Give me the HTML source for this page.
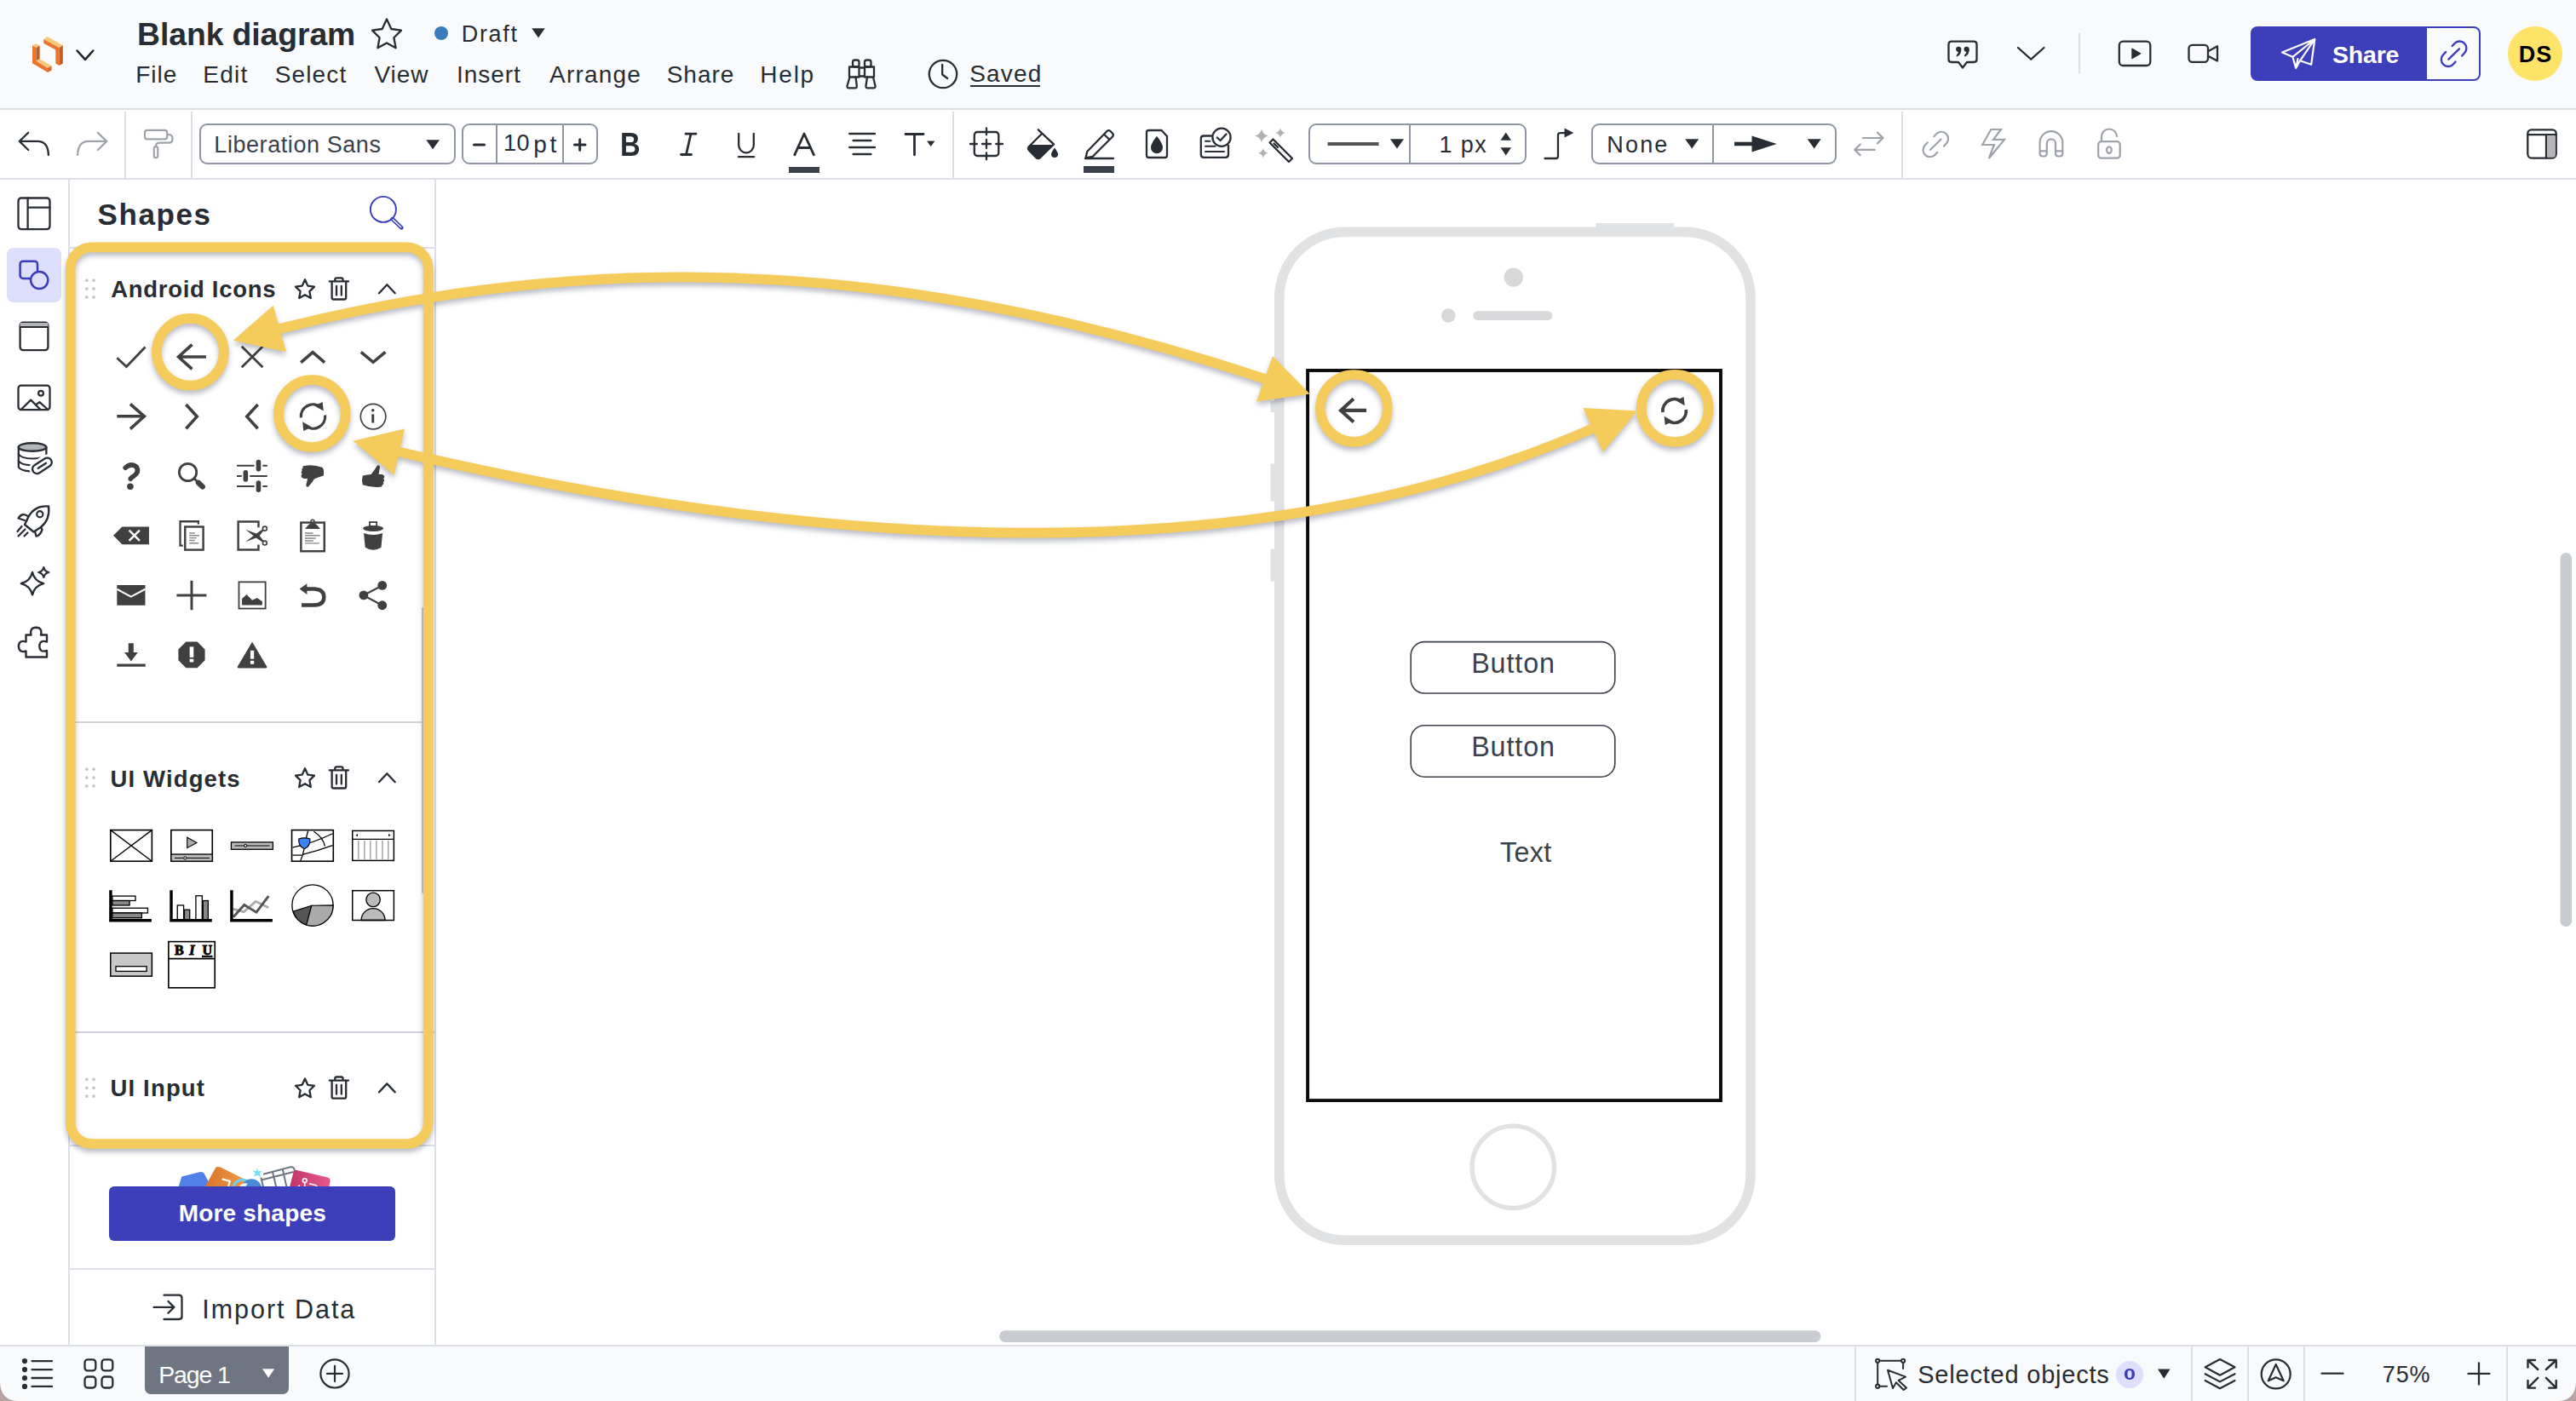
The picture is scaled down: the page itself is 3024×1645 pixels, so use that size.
<!DOCTYPE html>
<html lang="en">
<head>
<meta charset="utf-8">
<title>Blank diagram</title>
<style>
*{box-sizing:border-box;margin:0;padding:0}
html,body{width:3024px;height:1645px;overflow:hidden;background:#fff}
body{font-family:"Liberation Sans",sans-serif;color:#282c33;position:relative;font-kerning:normal}
@media (max-width:2000px){html{width:1512px;height:823px}body{zoom:.5}}
.abs{position:absolute}
.t{position:absolute;white-space:pre;line-height:1;font-kerning:normal}
svg{position:absolute;overflow:visible}
#header{position:absolute;left:0;top:0;width:3024px;height:129px;background:#f9fafc;border-bottom:2px solid #dcdfe6}
#toolbar{position:absolute;left:0;top:129px;width:3024px;height:82px;background:#fff;border-bottom:2px solid #dcdfe6}
#rail{position:absolute;left:0;top:211px;width:82px;height:1368px;background:#fff;border-right:2px solid #dcdfe6}
#panel{position:absolute;left:82px;top:211px;width:430px;height:1368px;background:#fff;border-right:2px solid #dcdfe6}
#canvas{position:absolute;left:512px;top:211px;width:2512px;height:1368px;background:#fff}
#bottom{position:absolute;left:0;top:1579px;width:3024px;height:66px;background:#f9fafc;border-top:2px solid #dcdfe6}
.vsep{position:absolute;width:2px;background:#dcdfe6}
.hsep{position:absolute;height:2px;background:#dcdfe6}
.box{position:absolute;border:2px solid #8f96a3;border-radius:9px;background:#fff}
.ic{fill:none;stroke:#282c33;stroke-width:2.3;stroke-linecap:round;stroke-linejoin:round}
.icg{fill:none;stroke:#9ea3ab;stroke-width:2.2;stroke-linecap:round;stroke-linejoin:round}
</style>
</head>
<body>
<div id="header"></div>
<div id="toolbar"></div>
<div id="rail"></div>
<div id="panel"></div>
<div id="canvas"></div>
<div id="bottom"></div>

<!-- ================= HEADER ================= -->
<!--HEADER-START-->
<svg class="abs" style="left:20px;top:20px" width="120" height="90" viewBox="0 0 1868 1401">
 <polygon points="280,520 345,483 415,522 350,560" fill="#f9c877"/>
 <polygon points="280,520 350,560 350,800 560,930 560,1012 280,845" fill="#e8762f"/>
 <polygon points="350,560 415,522 415,765 350,800" fill="#c45d25"/>
 <polygon points="350,800 415,765 632,893 560,930" fill="#f9c877"/>
 <polygon points="560,930 632,893 632,972 560,1012" fill="#dc6c2c"/>
 <polygon points="485,405 555,358 838,518 770,560" fill="#f9c877"/>
 <polygon points="485,405 770,560 770,888 705,850 705,600 485,478" fill="#e8762f"/>
 <polygon points="770,560 838,518 838,850 770,888" fill="#c45d25"/>
 <polyline points="1098,615 1245,778 1390,615" fill="none" stroke="#1e2430" stroke-width="40" stroke-linecap="round" stroke-linejoin="round"/>
</svg>
<span class="t" style="left:161.1px;top:22.0px;font-size:37.3px;font-weight:700;color:#282c33;letter-spacing:-0.07px;">Blank diagram</span>
<span class="t" style="left:541.8px;top:26.7px;font-size:27px;font-weight:400;color:#282c33;letter-spacing:1.66px;">Draft</span>
<span class="t" style="left:159.3px;top:73.8px;font-size:28px;font-weight:400;color:#282c33;letter-spacing:0.97px;">File</span>
<span class="t" style="left:238.3px;top:73.8px;font-size:28px;font-weight:400;color:#282c33;letter-spacing:1.24px;">Edit</span>
<span class="t" style="left:322.7px;top:73.8px;font-size:28px;font-weight:400;color:#282c33;letter-spacing:1.14px;">Select</span>
<span class="t" style="left:439.5px;top:73.8px;font-size:28px;font-weight:400;color:#282c33;letter-spacing:0.95px;">View</span>
<span class="t" style="left:536.0px;top:73.8px;font-size:28px;font-weight:400;color:#282c33;letter-spacing:0.93px;">Insert</span>
<span class="t" style="left:645.0px;top:73.8px;font-size:28px;font-weight:400;color:#282c33;letter-spacing:1.20px;">Arrange</span>
<span class="t" style="left:782.7px;top:73.8px;font-size:28px;font-weight:400;color:#282c33;letter-spacing:0.98px;">Share</span>
<span class="t" style="left:892.3px;top:73.8px;font-size:28px;font-weight:400;color:#282c33;letter-spacing:1.77px;">Help</span>
<span class="t" style="left:1138.2px;top:73.3px;font-size:28px;font-weight:400;color:#282c33;letter-spacing:1.18px;">Saved</span>
<div class="abs" style="left:1139px;top:100px;width:82px;height:2px;background:#282c33"></div>
<div class="abs" style="left:510px;top:31px;width:16px;height:16px;border-radius:50%;background:#3a7cbb"></div>
<svg class="abs" style="left:0;top:0" width="3024" height="129" viewBox="0 0 3024 129">
 <g class="ic">
  <!-- star -->
  <path d="M454 23.5 L459.3 35 L471 36.6 L462.4 45.2 L464.6 57.3 L454 51.4 L443.4 57.3 L445.6 45.2 L437 36.6 L448.7 35 Z" transform="translate(0,-1)"/>
  <!-- binoculars -->
  <rect x="1001" y="70.5" width="7.5" height="8" rx="2.5"/>
  <rect x="1015" y="70.5" width="7.5" height="8" rx="2.5"/>
  <path d="M997 78.5 H1008.5 V90.5 H997 Z M1015 78.5 H1026 V90.5 H1015 Z M1008.5 79.5 H1015 M1008.5 89.5 H1015"/>
  <path d="M997.5 90.5 L994.5 101 Q994.3 103.3 996.5 103.3 H1004 Q1006 103.3 1005.8 101 L1004.5 90.5"/>
  <path d="M1018 90.5 L1016.5 101 Q1016.3 103.3 1018.5 103.3 H1025.5 Q1027.8 103.3 1027.5 101 L1025 90.5"/>
  <!-- clock -->
  <circle cx="1107" cy="87" r="16.2"/>
  <path d="M1106.2 76 V87.5 L1112.2 92"/>
  <!-- comment -->
  <path d="M2291 48.7 H2317 Q2320.5 48.7 2320.5 52.2 V69.5 Q2320.5 73 2317 73 H2309 L2304 79.5 L2299 73 H2291 Q2287.5 73 2287.5 69.5 V52.2 Q2287.5 48.7 2291 48.7 Z"/>
  <!-- chevron -->
  <path d="M2369 56 L2384.2 69.7 L2399.5 56"/>
  <!-- present -->
  <rect x="2487.8" y="48.7" width="36.5" height="28.3" rx="4.5"/>
  <!-- video -->
  <rect x="2569.5" y="52.8" width="22.5" height="20" rx="4"/>
  <path d="M2593.5 59.5 L2603 54.3 V71.5 L2593.5 66.5"/>
 </g>
 <path d="M2503 57.3 V68.4 L2512.5 62.8 Z" fill="#282c33" stroke="#282c33" stroke-width="1.5" stroke-linejoin="round"/>
 <!-- quotes -->
 <g fill="#282c33"><circle cx="2299.2" cy="57.8" r="3.1"/><path d="M2302.3 57.4 Q2302.8 63.500 2297.500 66.500 L2296.400 65.200 Q2299.400 62.600 2299.300 59.500 Z"/>
 <circle cx="2308.6" cy="57.8" r="3.1"/><path d="M2311.700 57.400 Q2312.200 63.500 2306.900 66.500 L2305.800 65.200 Q2308.800 62.600 2308.700 59.500 Z"/></g>
 <!-- caret draft -->
 <path d="M624.3 33.2 H639.7 L632 44.6 Z" fill="#282c33"/>
 <rect x="2440" y="39" width="2" height="47.5" fill="#dcdfe6"/>
</svg>
<div class="abs" style="left:2642px;top:31px;width:270px;height:64px;border-radius:8px;background:#3d3fba"></div>
<div class="abs" style="left:2849px;top:33px;width:61px;height:60px;border-radius:0 6px 6px 0;background:#fafbfd"></div>
<span class="t" style="left:2738.1px;top:50.2px;font-size:28.5px;font-weight:700;color:#ffffff;letter-spacing:-0.24px;">Share</span>
<div class="abs" style="left:2944px;top:31px;width:64px;height:64px;border-radius:50%;background:#fde368"></div>
<span class="t" style="left:2956.7px;top:51.3px;font-size:27px;font-weight:700;color:#000000;letter-spacing:1.11px;">DS</span>
<svg class="abs" style="left:0;top:0" width="3024" height="129" viewBox="0 0 3024 129">
 <g fill="none" stroke="#fff" stroke-width="2.2" stroke-linejoin="round" stroke-linecap="round">
  <path d="M2717.3 46 L2679 61.6 L2691.4 66.8 L2695.2 80 L2700 71.3 L2713.2 75.8 Z M2691.4 66.8 L2717.3 46 L2700 71.3 M2695.2 80 L2697.5 69"/>
 </g>
 <g fill="none" stroke="#3d3fba" stroke-width="2.4" stroke-linecap="round" transform="translate(2880.6,63.3)"><path d="M-1.9 -9.3 L1.5 -12.9 A8.1 8.1 0 0 1 12.9 -1.500 L9.500 2.200 M1.900 9.300 L-1.500 12.900 A8.100 8.100 0 0 1 -12.900 1.500 L-9.500 -2.200 M-6.200 6.300 L6.300 -6"/></g>
</svg>
<!--HEADER-END-->

<!-- ================= TOOLBAR ================= -->
<!--TOOLBAR-START-->
<div class="vsep" style="left:146px;top:131px;height:78px"></div>
<div class="vsep" style="left:224px;top:131px;height:78px"></div>
<div class="vsep" style="left:1118px;top:131px;height:78px"></div>
<div class="vsep" style="left:2232px;top:131px;height:78px"></div>
<div class="box" style="left:234px;top:145px;width:300.5px;height:48px"></div>
<span class="t" style="left:251.3px;top:157.1px;font-size:27px;font-weight:400;color:#3a414a;letter-spacing:0.57px;">Liberation Sans</span>
<div class="box" style="left:542px;top:145px;width:160px;height:48px"></div>
<div class="abs" style="left:582px;top:147px;width:2px;height:44px;background:#8f96a3"></div>
<div class="abs" style="left:660px;top:147px;width:2px;height:44px;background:#8f96a3"></div>
<span class="t" style="left:591.0px;top:155.4px;font-size:27px;font-weight:400;color:#282c33;letter-spacing:0.40px;">10</span>
<span class="t" style="left:626.2px;top:155.5px;font-size:28px;font-weight:400;color:#282c33;letter-spacing:3.72px;">pt</span>
<span class="t" style="left:727.9px;top:150.5px;font-size:38px;font-weight:700;color:#282c33;letter-spacing:0.00px;transform:scaleX(0.863);transform-origin:0 0;">B</span>
<div class="box" style="left:1536px;top:145px;width:256px;height:48px"></div>
<div class="abs" style="left:1654px;top:147px;width:2px;height:44px;background:#8f96a3"></div>
<div class="box" style="left:1867.5px;top:145px;width:288.5px;height:48px;background:none"></div>
<div class="abs" style="left:2010px;top:147px;width:2px;height:44px;background:#8f96a3"></div>
<span class="t" style="left:1689.5px;top:156.9px;font-size:27px;font-weight:400;color:#282c33;letter-spacing:1.39px;">1 px</span>
<span class="t" style="left:1886.3px;top:156.9px;font-size:27px;font-weight:400;color:#282c33;letter-spacing:2.18px;">None</span>
<div class="abs" style="left:926px;top:195.5px;width:36px;height:7px;background:#3a414a"></div>
<div class="abs" style="left:1272px;top:195px;width:36px;height:7.5px;background:#3a414a"></div>
<svg class="abs" style="left:0;top:129px" width="3024" height="82" viewBox="0 129 3024 82">
 <g class="ic" stroke="#1e2430" stroke-width="2.15">
  <!-- undo -->
  <path d="M33.2 155.8 L22.8 165.9 L33.2 176 M22.8 165.9 H44 Q56.5 165.9 56.9 182"/>
  <!-- minus plus in size box -->
  <path d="M556.5 170 H568.5 M674.5 170 H687 M680.7 163.8 V176.2" stroke-width="3"/>
  <!-- I -->
  <path d="M805 157.2 H817 M799.5 181.5 H811.5 M811 157.2 L805.5 181.5" stroke-width="2.8"/>
  <!-- U -->
  <path d="M867.2 157 V170.5 A8.8 8.8 0 0 0 884.8 170.5 V157 M867 184.2 H885.2"/>
  <!-- A -->
  <path d="M932.8 181.8 L944 157 L955.4 181.8 M936.6 173.5 H951.6" stroke-width="2.8"/>
  <!-- align -->
  <path d="M997.2 157 H1027 M1001.5 165 H1022.5 M997.2 173 H1027 M1001.5 181 H1022.5"/>
  <!-- T -->
  <path d="M1063 157.5 H1084 M1073.5 157.5 V181.8" stroke-width="2.8"/>
  <!-- crosshair -->
  <rect x="1143.8" y="155" width="28.5" height="28" rx="3.5"/>
  <path d="M1158 150.5 V158.3 M1158 179.5 V187.3 M1139 169 H1146.8 M1169.3 169 H1177 M1153 169 H1163 M1158 164 V174"/>
  <!-- bucket -->
  <path d="M1218.8 152.3 L1237 169.4 L1220.8 185.3 Q1218.6 187 1216.5 185.3 L1208 176.5 Q1206 174 1208 172 L1222.5 157.5"/>
  <!-- pen -->
  <path d="M1274.5 185.5 L1276.2 178 L1299.5 154 Q1301.5 152.3 1303.5 154 L1306 156.5 Q1307.7 158.5 1306 160.5 L1282.5 184 Z M1296 157.7 L1302.5 164 M1274 186 H1307"/>
  <!-- page drop -->
  <path d="M1348.5 153 H1363.5 L1370 160 V182.5 Q1370 185 1367.5 185 H1348.5 Q1346 185 1346 182.5 V155.5 Q1346 153 1348.5 153 Z"/>
  <!-- card -->
  <path d="M1423 159.5 H1413 Q1409.8 159.5 1409.8 162.7 V181.5 Q1409.8 184.8 1413 184.8 H1438.7 Q1442 184.8 1442 181.5 V171"/>
  <path d="M1415 165.7 H1420.5 M1415 171.8 H1426.5 M1415 177.9 H1437" stroke-width="2"/>
  <circle cx="1434" cy="161.2" r="10.6" fill="#fff"/>
  <path d="M1428.8 161.5 L1432.6 165 L1439.5 157.5"/>
  <!-- wand -->
  <path d="M1494.5 163.5 L1517 186 L1513 190 L1490.5 167.5 Z M1495.5 168.5 L1500 173"/>
  <!-- connector -->
  <path d="M1813.5 186 H1826.5 Q1829 186 1829 183.5 V158.7 Q1829 156.2 1831.5 156.2 H1837" stroke-width="2.3"/>
  <!-- panel right -->
  <rect x="2967.3" y="152.3" width="33.4" height="33.3" rx="4.5"/>
  <path d="M2967.3 158.2 H3000.7 M2989 158.2 V185.6"/>
 </g>
 <g fill="#282c33">
  <path d="M500.3 164.2 H516 L508.1 175.2 Z"/>
  <path d="M1088 165.5 H1097.5 L1092.7 172 Z"/>
  <path d="M1208.5 170 H1236 L1220.8 185 Q1218.6 187 1216.5 185 L1208 176.5 Q1206 174 1208 172 Z"/>
  <path d="M1238 173.5 Q1242 179 1242 181 A4 4 0 0 1 1234 181 Q1234 179 1238 173.5 Z"/>
  <path d="M1358 159.8 Q1365 168.5 1365 173.3 A7 7 0 0 1 1351 173.3 Q1351 168.5 1358 159.8 Z"/>
  <path d="M1632 163.2 H1648 L1640 174.6 Z"/>
  <path d="M1761.5 164.8 H1774 L1767.8 155.4 Z"/>
  <path d="M1761.5 173.3 H1774 L1767.8 182.6 Z"/>
  <path d="M1836.5 150.4 V161.6 L1847.3 156 Z"/>
  <path d="M1978.2 163.2 H1994.2 L1986.2 174.6 Z"/>
  <path d="M2121.7 163.2 H2137.7 L2129.7 174.6 Z"/>
  <path d="M2036 166.7 H2058 V171.2 H2036 Z"/>
  <path d="M2056.5 159.5 L2085.8 169 L2056.5 178.6 Z"/>
 </g>
 <rect x="2990.2" y="159.4" width="9.3" height="25" fill="#b4b5b7"/>
 <path d="M1558.5 169 H1618.5" stroke="#555" stroke-width="4.2" fill="none"/>
 <!-- sparkles -->
 <g fill="#b1b1b1">
  <path d="M1481 151.5 Q1482.5 158 1489 159.5 Q1482.5 161 1481 167.5 Q1479.5 161 1473 159.5 Q1479.5 158 1481 151.5 Z"/>
  <path d="M1503 150.3 Q1504 155 1508.8 156 Q1504 157 1503 161.7 Q1502 157 1497.2 156 Q1502 155 1503 150.3 Z"/>
  <path d="M1482.8 174 Q1483.8 178.8 1488.6 179.8 Q1483.8 180.8 1482.8 185.6 Q1481.8 180.8 1477 179.8 Q1481.8 178.8 1482.8 174 Z"/>
 </g>
 <g class="icg" stroke="#8e9299">
  <!-- redo -->
  <path d="M114.8 155.8 L125.2 165.9 L114.8 176 M125.2 165.9 H104 Q91.5 165.9 91.1 182"/>
  <!-- roller -->
  <rect x="170" y="152.8" width="26.2" height="10.6" rx="3"/>
  <path d="M196.5 158 H198 Q202.5 158 202.5 162.5 V163 Q202.5 167.7 198 167.7 H187.5 Q183 167.7 183 172"/>
  <rect x="180.8" y="172.2" width="4.5" height="13" rx="2.2"/>
  <!-- swap -->
  <path d="M2187 162 H2210.3 M2204 155.6 L2210.5 162 L2204 168.4 M2200.8 175.9 H2177.5 M2183.8 169.5 L2177.3 175.9 L2183.8 182.3" stroke-width="2.2"/>
  <!-- link -->
  <g transform="translate(2272.3,169.5)"><path d="M-1.9 -9.3 L1.5 -12.9 A8.1 8.1 0 0 1 12.9 -1.5 L9.5 2.2 M1.9 9.3 L-1.5 12.9 A8.1 8.1 0 0 1 -12.9 1.5 L-9.5 -2.2 M-6.2 6.3 L6.3 -6"/></g>
  <!-- bolt -->
  <path d="M2337.3 152 H2349 L2340 163.9 H2353 L2334.8 186 L2340.9 170 H2327.2 Z" stroke-linejoin="miter"/>
  <!-- magnet -->
  <path d="M2394.6 167.5 A13.35 13.35 0 0 1 2421.3 167.5 V180 Q2421.3 183.5 2418 183.5 H2416.3 Q2413 183.5 2413 180 V168.5 A5.1 5.1 0 0 0 2402.8 168.5 V180 Q2402.8 183.5 2399.5 183.5 H2397.9 Q2394.6 183.5 2394.6 180 Z M2394.6 177.4 H2402.8 M2413 177.4 H2421.3"/>
  <!-- lock -->
  <rect x="2463.2" y="166.2" width="25.5" height="19.5" rx="3.5"/>
  <path d="M2467 166 V161 A9 9 0 0 1 2485 160"/>
  <ellipse cx="2475.9" cy="176.1" rx="2.9" ry="3.8"/>
 </g>
</svg>
<!--TOOLBAR-END-->

<!-- ================= RAIL ================= -->
<!--RAIL-START-->
<div class="abs" style="left:8px;top:291px;width:64px;height:64px;border-radius:8px;background:#dedffc"></div>
<svg class="abs" style="left:0;top:211px" width="82" height="600" viewBox="0 211 82 600">
 <g class="ic" stroke-width="2.15">
  <rect x="21.5" y="232.5" width="37" height="36.6" rx="3.5"/>
  <path d="M32.6 232.5 V269 M32.6 243.6 H58.5"/>
  <!-- window -->
  <rect x="23.6" y="378.6" width="32.8" height="32.6" rx="3.5"/>
  <!-- image -->
  <rect x="21.5" y="452.6" width="37" height="28.6" rx="3.5"/>
  <path d="M24.6 481 L36.2 469.6 L47.6 481 M42 475.5 L46.4 472.2 L56.4 481" stroke-width="2.3"/>
  <circle cx="48" cy="461.8" r="2.9" stroke-width="2.2"/>
  <!-- db -->
  <path d="M21.8 525 V548.500 Q24.500 553 36 553.300 M54.400 525 V533" />
  <path d="M21.800 533.200 Q25 538.300 38 538.500 Q44 538.400 47 537.500 M21.800 541 Q25 546 36.500 546.200" stroke-width="2.150"/>
  <!-- rocket -->
  <path d="M57 594.5 Q41 593 33.5 606.5 L29 616 L39.5 624.5 L48 619 Q59 610 57 594.5 Z" stroke-width="2.4"/>
  <circle cx="46.8" cy="603.8" r="3.6" stroke-width="2.2"/>
  <path d="M33.5 606.5 Q26 601 21.5 608.5 L29 611 M48 619 L49.5 622 Q47 629 42.5 629.5 L41 624" stroke-width="2.3"/>
  <path d="M20.5 624 L25.5 618 M21.5 629.5 L29.5 621.5 M28.5 629.5 L32.5 625.5" stroke-width="2.2"/>
  <!-- sparkle -->
  <path d="M38 672 Q40.5 682.5 51.2 685.2 Q40.5 688 38 698.4 Q35.500 688 24.8 685.2 Q35.5 682.500 38 672 Z" stroke-width="2.4"/>
  <path d="M51.300 666 Q52.400 671 57.300 672 Q52.400 673 51.300 678 Q50.200 673 45.300 672 Q50.200 671 51.300 666 Z" stroke-width="2.2"/>
  <!-- puzzle -->
  <path d="M30.500 745.500 H36.500 Q34.500 737 42.500 736.800 Q50 737 48 745.500 H55 V753.500 Q46.500 751 46.300 758.800 Q46.500 766.500 55 764 V771.500 H30.500 V764.500 Q22.500 767 21.800 758.800 Q22.500 751 30.500 753.500 Z" stroke-width="2.4"/>
 </g>
 <ellipse cx="38" cy="525" rx="16.300" ry="4.800" fill="#b4b5b7" stroke="#282c33" stroke-width="2.400"/>
 <path d="M23.600 379 H56.400 V384 H23.600 Z" fill="#b4b5b7"/>
 <path d="M23.600 384 H56.400" stroke="#282c33" stroke-width="2.200"/>
 <!-- db link -->
 <g transform="translate(49.4,546.8) rotate(-33)">
  <rect x="-13" y="-6.500" width="26" height="13" rx="6.500" fill="#fff" stroke="#fff" stroke-width="6"/>
  <rect x="-12.500" y="-5.300" width="25" height="10.600" rx="5.300" fill="none" stroke="#282c33" stroke-width="2.300"/>
  <path d="M-5.500 0 H5.500" stroke="#282c33" stroke-width="2.300" stroke-linecap="round"/>
 </g>
 <!-- shapes icon -->
 <rect x="23.600" y="306.700" width="20.400" height="20.200" rx="3.500" fill="none" stroke="#3b3db8" stroke-width="2.500"/>
 <circle cx="46.200" cy="329" r="10.100" fill="#dedffc" stroke="#3b3db8" stroke-width="2.500"/>
</svg>
<!--RAIL-END-->

<!-- ================= PANEL ================= -->
<!--PANEL-START-->
<span class="t" style="left:114.5px;top:234.4px;font-size:35px;font-weight:700;color:#282c33;letter-spacing:1.61px;">Shapes</span>
<div class="hsep" style="left:82px;top:289.5px;width:429px"></div>
<div class="hsep" style="left:88px;top:847px;width:409px;background:#cfd3da"></div>
<div class="hsep" style="left:88px;top:1211px;width:422px;background:#cfd3da"></div>
<div class="hsep" style="left:82px;top:1343.500px;width:429px"></div>
<div class="hsep" style="left:82px;top:1488.500px;width:429px"></div>
<div class="abs" style="left:494.500px;top:713px;width:3.500px;height:336px;background:#c3c6cb;border-radius:2px"></div>
<span class="t" style="left:130.3px;top:326.0px;font-size:27.5px;font-weight:700;color:#282c33;letter-spacing:0.69px;">Android Icons</span>
<span class="t" style="left:129.5px;top:900.6px;font-size:27.5px;font-weight:700;color:#282c33;letter-spacing:1.14px;">UI Widgets</span>
<span class="t" style="left:129.5px;top:1264.3px;font-size:27.5px;font-weight:700;color:#282c33;letter-spacing:1.16px;">UI Input</span>
<svg class="abs" style="left:82px;top:211px" width="430" height="1368" viewBox="82 211 430 1368">
 <defs>
  <g id="sechdr">
   <g fill="#c4c7cc"><circle cx="101.800" cy="329.200" r="1.900"/><circle cx="110" cy="329.200" r="1.900"/><circle cx="101.800" cy="339.100" r="1.900"/><circle cx="110" cy="339.100" r="1.900"/><circle cx="101.800" cy="348.900" r="1.900"/><circle cx="110" cy="348.900" r="1.900"/></g>
   <g class="ic" stroke-width="2">
    <path d="M358 328.300 L361.300 335.600 L369 336.600 L363.400 342.100 L364.800 350 L358 346.200 L351.200 350 L352.600 342.100 L347 336.600 L354.700 335.600 Z"/>
    <path d="M386.800 330.400 H409 M389.600 330.400 V349.500 Q389.600 351.500 391.600 351.500 H404.200 Q406.200 351.500 406.200 349.500 V330.400 M393.300 330.400 V328.300 Q393.300 326.300 395.300 326.300 H400.500 Q402.500 326.300 402.500 328.300 V330.400 M395 335.800 V346.500 M400.800 335.800 V346.500"/>
    <path d="M445 344.200 L454.300 334.200 L463.700 344.200"/>
   </g>
  </g>
 </defs>
 <use href="#sechdr"/>
 <use href="#sechdr" y="574"/>
 <use href="#sechdr" y="938.200"/>
 <!-- search -->
 <g fill="none" stroke="#3b3db8" stroke-width="1.900" stroke-linecap="round"><circle cx="449.900" cy="245.900" r="15"/><path d="M460.700 257.200 L471.300 267.300" stroke-width="4.600"/><path d="M461.200 257.700 L470.800 266.800" stroke="#fff" stroke-width="1.300"/></g>
 <!-- import -->
 <g class="ic" stroke-width="2.400"><path d="M192.500 1520.700 H210 Q213.500 1520.700 213.500 1524.200 V1545.500 Q213.500 1549 210 1549 H192.500 M180.500 1534.900 H203.500 M197.500 1528 L204.300 1534.900 L197.500 1541.800"/></g>
</svg>
<!-- more shapes deco -->
<svg class="abs" style="left:60px;top:1180px" width="470" height="230" viewBox="0 0 2576 1261">
 <defs><linearGradient id="gpk" x1="0" x2="1"><stop offset="0" stop-color="#c2356b"/><stop offset="1" stop-color="#e8588c"/></linearGradient>
 <linearGradient id="gor" x1="0" x2="1"><stop offset="0" stop-color="#d9762b"/><stop offset="1" stop-color="#f09a45"/></linearGradient></defs>
 <path d="M840 1105 L960 1075 Q975 1073 985 1085 L1030 1170 H820 Z" fill="#5180e8"/>
 <path d="M1060 1045 Q1075 1038 1090 1045 L1260 1130 L1240 1170 H990 Z" fill="url(#gor)"/>
 <path d="M1100 1120 L1150 1135 L1140 1170" fill="none" stroke="#fff" stroke-width="12"/>
 <circle cx="1230" cy="1185" r="60" fill="none" stroke="#6fd0f2" stroke-width="16"/>
 <circle cx="1290" cy="1185" r="65" fill="#4a8bd8"/>
 <path d="M1210 1170 Q1230 1140 1265 1150 L1250 1170 Z" fill="#eee"/>
 <path d="M1325 1050 L1333 1072 L1358 1068 L1340 1085 L1350 1108 L1328 1095 L1305 1105 L1313 1083 L1297 1066 L1320 1070 Z" fill="#6fe0f8"/>
 <g fill="none" stroke="#6e7682" stroke-width="11"><path d="M1365 1090 L1540 1043 Q1560 1040 1565 1058 L1580 1170 M1350 1110 L1365 1170 M1358 1125 L1560 1075 M1425 1075 L1448 1170 M1490 1058 L1515 1170"/></g>
 <path d="M1575 1062 L1780 1110 Q1800 1118 1795 1138 L1788 1170 H1535 L1560 1075 Q1565 1060 1575 1062 Z" fill="url(#gpk)"/>
 <g fill="none" stroke="#fff" stroke-width="9"><circle cx="1632" cy="1130" r="13"/><path d="M1632 1143 V1170 M1660 1150 L1700 1160 L1715 1170 M1600 1160 L1590 1170"/></g>
</svg>
<div class="abs" style="left:128px;top:1393px;width:336px;height:64px;border-radius:6px;background:#3d3fba"></div>
<span class="t" style="left:209.7px;top:1411.3px;font-size:28px;font-weight:700;color:#ffffff;letter-spacing:0.19px;">More shapes</span>
<span class="t" style="left:237.3px;top:1521.5px;font-size:30.5px;font-weight:400;color:#282c33;letter-spacing:1.97px;">Import Data</span>
<!-- android icons rows 1-2 -->
<svg class="abs" style="left:90px;top:300px" width="410" height="230" viewBox="0 0 2497 1401">
 <g fill="none" stroke="#404040" stroke-width="19" stroke-linejoin="miter">
  <path d="M288 733 L356 795 L490 655" stroke-width="17"/>
  <path d="M825 637 L728 725 L825 812 M732 725 H925" stroke-width="22"/>
  <path d="M1180 650 L1330 800 M1330 650 L1180 800" stroke-width="17"/>
  <path d="M1603 765 L1688 692 L1773 765" stroke-width="22"/>
  <path d="M2033 690 L2120 763 L2207 690" stroke-width="22"/>
  <path d="M288 1150 H480 M383 1062 L483 1150 L383 1240" stroke-width="22"/>
  <path d="M782 1066 L860 1152 L782 1238" stroke-width="22"/>
  <path d="M1295 1066 L1217 1152 L1295 1238" stroke-width="22"/>
  <!-- refresh -->
  <path d="M1604 1160 A86 86 0 0 1 1745 1085" stroke-width="20"/>
  <path d="M1776 1142 A86 86 0 0 1 1635 1217" stroke-width="20"/>
  <circle cx="2120" cy="1152" r="90" stroke-width="10"/>
  <path d="M2118 1135 V1197" stroke-width="18"/>
 </g>
 <g fill="#404040">
  <path d="M1700 1075 L1758 1048 L1765 1112 Z"/>
  <path d="M1680 1228 L1622 1255 L1615 1190 Z"/>
  <circle cx="2118" cy="1107" r="11"/>
 </g>
</svg>
<!-- android icons rows 3-5 -->
<svg class="abs" style="left:90px;top:520px" width="410" height="230" viewBox="0 0 2497 1401">
 <g fill="none" stroke="#404040" stroke-linecap="butt">
  <path d="M348 178 Q390 140 428 172 Q450 210 405 240 Q385 253 385 258" stroke-width="34" stroke-linecap="round"/>
  <circle cx="795" cy="210" r="62" stroke-width="17"/>
  <path d="M838 253 L866 281" stroke-width="17"/><path d="M870 285 L900 314" stroke-width="38" stroke-linecap="round"/>
  <path d="M1145 163 H1270 M1330 163 H1363 M1145 237 H1180 M1238 237 H1363 M1145 311 H1270 M1330 311 H1363" stroke-width="12"/>
  <path d="M1300 138 V188 M1208 212 V262 M1300 286 V336" stroke-width="34" stroke-linecap="round"/>
  <!-- copy -->
  <path d="M870 582 V562 H740 V735 H760" stroke-width="14"/>
  <rect x="775" y="600" width="130" height="165" stroke-width="15"/>
  <path d="M805 645 H845 M805 662 H877 M805 680 H858 M805 698 H845 M805 717 H872" stroke="#888" stroke-width="9"/>
  <!-- cut -->
  <path d="M1300 605 V563 H1155 V765 H1300 V728" stroke-width="15"/>
  <path d="M1207 620 L1300 655 L1338 702 L1328 710 L1285 680 Z" fill="#404040" stroke="none"/><path d="M1207 708 L1300 673 L1338 626 L1328 618 L1285 648 Z" fill="#404040" stroke="none"/>
  <circle cx="1345" cy="613" r="15" stroke-width="10"/><circle cx="1345" cy="716" r="15" stroke-width="10"/>
  <!-- paste -->
  <rect x="1604" y="570" width="167" height="205" stroke-width="15"/>
  <circle cx="1687" cy="562" r="12" stroke-width="9"/>
  <path d="M1632 645 H1690 M1632 663 H1740 M1632 682 H1710 M1632 700 H1692 M1632 718 H1735" stroke="#888" stroke-width="9"/>
  <!-- trash handle -->
  <rect x="2095" y="567" width="50" height="30" stroke-width="11"/>
  <!-- plus -->
  <path d="M715 1090 H928 M822 985 V1195" stroke-width="18"/>
  <!-- image -->
  <rect x="1160" y="995" width="190" height="190" stroke-width="11"/>
  <!-- undo -->
  <path d="M1640 1045 H1700 Q1768 1050 1768 1102 Q1768 1160 1700 1160 H1608" stroke-width="27"/>
  <!-- share -->
  <path d="M2185 1020 L2050 1090 L2185 1162" stroke-width="13"/>
 </g>
 <g fill="#404040">
  <circle cx="383" cy="312" r="23"/>
  <!-- thumbs down -->
  <path d="M1625 165 Q1690 150 1755 175 Q1772 185 1765 235 Q1730 245 1700 258 Q1680 290 1655 315 Q1640 318 1640 300 Q1650 275 1650 255 Q1615 258 1608 245 Q1600 230 1612 225 Q1600 210 1612 200 Q1605 185 1618 180 Q1612 168 1625 165 Z"/>
  <!-- thumbs up -->
  <path d="M2045 235 Q2080 225 2105 225 Q2130 195 2150 162 Q2165 155 2168 175 Q2162 205 2160 225 Q2192 222 2198 235 Q2205 250 2193 255 Q2205 270 2193 280 Q2198 297 2185 300 Q2188 315 2170 315 Q2110 322 2045 300 Q2035 270 2045 235 Z"/>
  <!-- backspace -->
  <path d="M262 663 L325 600 H517 V727 H325 Z"/>
  <!-- paste clip -->
  <path d="M1633 615 Q1650 590 1668 577 H1706 Q1724 590 1741 615 Z"/>
  <!-- trash -->
  <ellipse cx="2120" cy="612" rx="73" ry="21"/>
  <path d="M2053 645 Q2120 670 2187 645 L2177 748 Q2120 785 2063 748 Z"/>
  <!-- mail -->
  <path d="M288 1018 H490 V1162 H288 Z"/>
  <!-- image mountains -->
  <path d="M1182 1160 V1115 L1215 1085 L1255 1125 L1290 1108 L1327 1135 V1160 Z"/>
  <!-- undo head -->
  <path d="M1593 1045 L1647 1006 V1084 Z"/>
  <circle cx="2185" cy="1020" r="33"/><circle cx="2052" cy="1090" r="33"/><circle cx="2185" cy="1162" r="33"/>
 </g>
 <path d="M375 625 L450 700 M450 625 L375 700" stroke="#fff" stroke-width="15" fill="none"/>
 <path d="M288 1046 L388 1100 L490 1046" stroke="#fff" stroke-width="13" fill="none"/>
</svg>
<!-- android icons row 6 -->
<svg class="abs" style="left:90px;top:740px" width="410" height="70" viewBox="0 0 2497 426">
 <g fill="#404040">
  <path d="M370 93 H407 V158 H437 L389 222 L342 158 H370 Z"/>
  <path d="M288 241 H492 V260 H288 Z"/>
  <path d="M782 82 H862 L917 137 V215 L862 270 H782 L727 215 V137 Z"/>
  <path d="M1255 88 L1358 262 Q1360 268 1352 268 H1158 Q1150 268 1152 262 Z" stroke="#404040" stroke-width="6" stroke-linejoin="round"/>
 </g>
 <g fill="#fff"><rect x="808" y="118" width="28" height="76"/><rect x="808" y="205" width="28" height="23"/><rect x="1242" y="145" width="26" height="60"/><rect x="1242" y="218" width="26" height="24"/></g>
</svg>
<!-- ui widgets -->
<svg class="abs" style="left:90px;top:950px" width="410" height="230" viewBox="0 0 2497 1401">
 <g fill="none" stroke="#000" stroke-width="10">
  <rect x="242" y="150" width="296" height="223"/><path d="M242 150 L538 373 M538 150 L242 373" stroke-width="8"/>
  <rect x="675" y="150" width="295" height="223"/>
  <rect x="675" y="323" width="295" height="50" fill="#bbb" stroke-width="8"/>
  <path d="M700 350 H950" stroke-width="6"/><circle cx="775" cy="350" r="10" fill="#ddd" stroke-width="6"/>
  <path d="M790 202 V278 L858 240 Z" fill="#aaa" stroke-width="7"/>
  <rect x="1105" y="237" width="298" height="51" fill="#bbb" stroke-width="8"/>
  <path d="M1130 262 H1380" stroke-width="6"/><circle cx="1207" cy="262" r="10" fill="#ddd" stroke-width="6"/>
  <rect x="1538" y="150" width="297" height="223"/>
  <g stroke-width="8"><path d="M1543 275 Q1700 240 1830 175 M1543 330 H1610 M1655 155 Q1640 200 1625 290 Q1615 340 1600 370 M1615 325 Q1720 300 1830 260 M1695 160 Q1760 200 1775 265"/></g>
  <path d="M1588 213 Q1628 200 1668 213 Q1672 265 1628 285 Q1584 265 1588 213 Z" fill="#3b82f6" stroke-width="7"/>
  <rect x="1972" y="155" width="296" height="213" stroke-width="9"/><path d="M1972 215 H2268" stroke-width="8"/>
  <path d="M2015 225 V360 M2058 225 V360 M2100 225 V360 M2143 225 V360 M2186 225 V360 M2228 225 V360" stroke="#999" stroke-width="8"/>
  <!-- hbar -->
  <path d="M243 580 V805 M232 797 H535" stroke-width="21"/>
  <rect x="255" y="622" width="165" height="33" stroke-width="8"/><rect x="255" y="655" width="123" height="33" fill="#888" stroke-width="8"/>
  <rect x="255" y="708" width="253" height="35" stroke-width="8"/><rect x="255" y="743" width="210" height="35" fill="#888" stroke-width="8"/>
  <!-- vbar -->
  <path d="M676 580 V805 M665 797 H967" stroke-width="21"/>
  <rect x="720" y="688" width="45" height="102" stroke-width="8"/><rect x="770" y="720" width="38" height="70" fill="#888" stroke-width="8"/>
  <rect x="852" y="620" width="45" height="170" stroke-width="8"/><rect x="903" y="655" width="37" height="135" fill="#888" stroke-width="8"/>
  <!-- line -->
  <path d="M1120 715 L1195 735 L1280 660 L1372 705" stroke="#aaa" stroke-width="17"/>
  <path d="M1120 772 L1198 685 L1285 738 L1372 622" stroke="#555" stroke-width="18"/>
  <path d="M1108 580 V805 M1097 797 H1400" stroke-width="21"/>
  <!-- pie -->
  <circle cx="1687" cy="688" r="147" fill="#fff" stroke-width="8"/>
  <path d="M1680 690 L1548 732 A147 147 0 0 0 1643 828 Z" fill="#555" stroke-width="7"/>
  <path d="M1680 690 L1643 828 A147 147 0 0 0 1834 688 Z" fill="#aaa" stroke-width="7"/>
  <!-- person -->
  <path d="M2035 795 A85 85 0 0 1 2205 795 Z" fill="#bbb" stroke-width="8"/>
  <circle cx="2120" cy="648" r="50" fill="#bbb" stroke-width="8"/>
  <rect x="1972" y="583" width="296" height="212" stroke-width="9"/>
  <!-- dialog -->
  <rect x="242" y="1030" width="296" height="165" fill="#c8c8c8" stroke-width="9"/><rect x="280" y="1125" width="220" height="35" fill="#fff" stroke-width="8"/>
  <rect x="657" y="948" width="331" height="330"/><path d="M657 1070 H988"/>
 </g>
 <g fill="#000"><path d="M1995 187 L2010 177 V197 Z M2245 187 L2230 177 V197 Z"/></g>
 <g font-family="Liberation Serif, serif" font-weight="700" font-size="98" fill="#000" stroke="#000" stroke-width="5"><text x="700" y="1043">B</text><text x="805" y="1043" font-style="italic">I</text><text x="898" y="1043" text-decoration="underline">U</text></g>
</svg>
<!--PANEL-END-->

<!-- ================= CANVAS ================= -->
<!--CANVAS-START-->
<svg class="abs" style="left:512px;top:211px" width="2512" height="1368" viewBox="512 211 2512 1368">
 <!-- phone -->
 <rect x="1873.5" y="262" width="91.5" height="8" fill="#e1e2e4"/>
 <rect x="1491.500" y="471" width="6" height="13" fill="#e1e2e4"/>
 <rect x="1491.500" y="544.500" width="6" height="44" fill="#e1e2e4"/>
 <rect x="1491.500" y="644.500" width="6" height="38" fill="#e1e2e4"/>
 <rect x="1501.800" y="272.400" width="553.200" height="1183.800" rx="77" fill="#fff" stroke="#e1e2e4" stroke-width="11.600"/>
 <circle cx="1776.800" cy="325.600" r="11.200" fill="#d8d8da"/>
 <circle cx="1700.300" cy="370.500" r="8.200" fill="#d8d8da"/>
 <rect x="1729.300" y="365.300" width="93" height="10.600" rx="5.300" fill="#d8d8da"/>
 <circle cx="1776.300" cy="1370.300" r="48.200" fill="none" stroke="#e1e2e4" stroke-width="5.400"/>
 <rect x="1535.100" y="435" width="484.900" height="857.100" fill="#fff" stroke="#0a0a0a" stroke-width="3.900"/>
 <rect x="1656.200" y="753.600" width="239.600" height="60.400" rx="16" fill="#fff" stroke="#3a414a" stroke-width="1.600"/>
 <rect x="1656.200" y="851.800" width="239.600" height="60.400" rx="16" fill="#fff" stroke="#3a414a" stroke-width="1.600"/>
 <!-- back icon -->
 <path d="M1589 468.300 L1574 481.900 L1589 495.500 M1575 481.900 H1604" fill="none" stroke="#404040" stroke-width="4.100"/>
 <!-- refresh icon -->
 <g fill="none" stroke="#404040" stroke-width="3.800">
  <path d="M1952 484 A13.700 13.700 0 0 1 1974.500 471.900"/>
  <path d="M1979.300 481 A13.700 13.700 0 0 1 1956.800 493.100"/>
 </g>
 <g fill="#404040"><path d="M1967.300 470.300 L1976.600 466 L1977.700 476.200 Z"/><path d="M1964 494.700 L1954.700 499 L1953.600 488.700 Z"/></g>
 <!-- scrollbars -->
 <rect x="1173" y="1562.300" width="964.500" height="13.600" rx="6.800" fill="#c9ccd1"/>
 <rect x="3005.500" y="649" width="13.600" height="439" rx="6.800" fill="#c9ccd1"/>
</svg>
<span class="t" style="left:1727.2px;top:763.1px;font-size:32.3px;font-weight:400;color:#3a414a;letter-spacing:0.89px;">Button</span>
<span class="t" style="left:1727.2px;top:861.4px;font-size:32.3px;font-weight:400;color:#3a414a;letter-spacing:0.89px;">Button</span>
<span class="t" style="left:1760.9px;top:984.9px;font-size:32.3px;font-weight:400;color:#3a414a;letter-spacing:0.37px;">Text</span>
<!--CANVAS-END-->

<!-- ================= BOTTOM ================= -->
<!--BOTTOM-START-->
<div class="abs" style="left:170px;top:1581px;width:169px;height:56px;border-radius:0 0 7px 7px;background:#6f7682"></div>
<span class="t" style="left:186.2px;top:1599.9px;font-size:28.5px;font-weight:400;color:#ffffff;letter-spacing:-1.14px;">Page 1</span>
<div class="vsep" style="left:2177px;top:1581px;height:64px"></div>
<div class="vsep" style="left:2572px;top:1581px;height:64px"></div>
<div class="vsep" style="left:2638px;top:1581px;height:64px"></div>
<div class="vsep" style="left:2704px;top:1581px;height:64px"></div>
<div class="vsep" style="left:2942px;top:1581px;height:64px"></div>
<div class="abs" style="left:2484px;top:1597.5px;width:32px;height:32px;border-radius:50%;background:#dedffc"></div>
<span class="t" style="left:2251.2px;top:1599.6px;font-size:29px;font-weight:400;color:#282c33;letter-spacing:0.79px;">Selected objects</span>
<span class="t" style="left:2493.3px;top:1604.6px;font-size:18.5px;font-weight:700;color:#3b3db8;letter-spacing:0.00px;transform:scaleX(1.366);transform-origin:0 0;">0</span>
<span class="t" style="left:2796.7px;top:1600.6px;font-size:27px;font-weight:400;color:#282c33;letter-spacing:0.95px;">75%</span>
<svg class="abs" style="left:0;top:1580px" width="3024" height="65" viewBox="0 1580 3024 65">
 <g class="ic" stroke="#1e2430">
  <path d="M37.5 1598.100 H61 M37.500 1608.100 H61 M37.500 1618 H61 M37.500 1627.900 H61"/>
  <rect x="99.500" y="1596.400" width="12.800" height="13" rx="3.500"/><rect x="119.500" y="1596.400" width="12.800" height="13" rx="3.500"/>
  <rect x="99.500" y="1616.500" width="12.800" height="13" rx="3.500"/><rect x="119.500" y="1616.500" width="12.800" height="13" rx="3.500"/>
  <circle cx="393" cy="1612.900" r="16.600" stroke-width="2.200"/><path d="M384 1612.900 H402 M393 1603.900 V1621.900" stroke-width="2.200"/>
  <!-- select -->
  <g stroke-width="2"><path d="M2206.400 1597.800 H2232 M2204.200 1600 V1625.500 M2234.100 1600 V1607 M2206.400 1627.700 H2215"/><circle cx="2204.200" cy="1597.800" r="2.100"/><circle cx="2234.100" cy="1597.800" r="2.100"/><circle cx="2204.200" cy="1627.700" r="2.100"/>
  <path d="M2216 1608.700 L2237 1616.600 L2228.700 1620.900 L2238 1629.400 L2234.700 1632 L2225.900 1623.200 L2222 1630 Z" fill="#f9fafc"/></g>
  <!-- layers -->
  <g stroke-width="2.200"><path d="M2606 1596 L2623.500 1605.300 L2606 1614.700 L2588.700 1605.300 Z M2588.700 1613.200 L2606 1622.400 L2623.500 1613.200 M2588.700 1621 L2606 1630.200 L2623.500 1621"/></g>
  <!-- compass -->
  <circle cx="2671.700" cy="1613.400" r="17" stroke-width="2.200"/>
  <path d="M2671.700 1602 L2680.700 1621.300 L2671.700 1617.300 L2662.800 1621.300 Z" stroke-width="2.200"/>
  <path d="M2725.500 1612.700 H2750.500 M2897.500 1612.800 H2922.500 M2910 1600.300 V1625.500"/>
  <g stroke-width="2.400"><path d="M2967.500 1597 L2979.300 1608 M2967.500 1605.500 V1597 H2976 M3000.700 1597 L2988.900 1608 M2992.200 1597 H3000.700 V1605.500 M2967.500 1629.600 L2979.300 1617.800 M2967.500 1621 V1629.600 H2976 M3000.700 1629.600 L2988.900 1617.800 M3000.700 1621 V1629.600 H2992.200"/></g>
 </g>
 <g fill="#282c33"><circle cx="29" cy="1598.100" r="3.100"/><circle cx="29" cy="1608.100" r="3.100"/><circle cx="29" cy="1618" r="3.100"/><circle cx="29" cy="1627.900" r="3.100"/>
  <path d="M2533 1607.600 H2547.600 L2540.300 1618.700 Z"/></g>
 <path d="M308 1607.300 H322.200 L315.100 1617.800 Z" fill="#fff"/>
 <!-- window corners -->
 <path d="M0 1621 Q0 1645 22 1645 H0 Z" fill="#b7a3a1"/>
 <path d="M3024 1621 Q3024 1645 3002 1645 H3024 Z" fill="#b7a3a1"/>
</svg>
<!--BOTTOM-END-->

<!-- ================= OVERLAY ================= -->
<!--OVERLAY-START-->
<svg class="abs" style="left:0;top:0;filter:drop-shadow(0 4px 3px rgba(20,30,60,.3))" width="3024" height="1645" viewBox="0 0 3024 1645">
 <g fill="none" stroke="#f5cc5c" stroke-width="11.700">
  <rect x="82.700" y="290.400" width="420" height="1052.600" rx="25"/>
  <circle cx="223.300" cy="413.300" r="39.400"/>
  <circle cx="366.300" cy="485.600" r="39.400"/>
  <circle cx="1589.400" cy="479.400" r="39.400"/>
  <circle cx="1966.200" cy="479.400" r="39.500"/>
  <path d="M318 388.600 L328.400 386 C738.600 282.200 1101.900 318.200 1484.500 444.700 L1494 447.900"/>
  <path d="M458 528.200 L468.800 530.600 C826.100 614.100 1408.100 706.400 1870 503 L1880 499"/>
 </g>
 <g fill="#f5cc5c">
  <path d="M273.900 399.700 L320.700 358.800 L336 413.300 Z"/>
  <path d="M1537.600 462.500 L1494 417.900 L1475 471.500 Z"/>
  <path d="M414.400 517.700 L475.100 503.400 L462.500 557.800 Z"/>
  <path d="M1921.900 482.500 L1858.500 479 L1881.600 531.100 Z"/>
 </g>
</svg>
<!--OVERLAY-END-->

</body>
</html>
